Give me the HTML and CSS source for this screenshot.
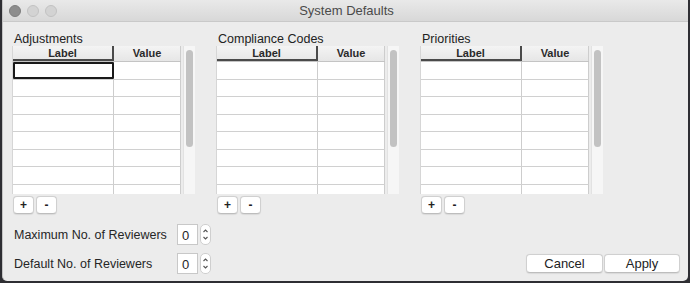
FILE: index.html
```html
<!DOCTYPE html>
<html lang="en">
<head>
    <meta charset="UTF-8">
    <title>System Defaults</title>
    <link rel="stylesheet" href="styles.css">
</head>
<body>
    <div class="window">
        <div class="titlebar">
            <div class="lights">
                <span class="light dark"></span>
                <span class="light"></span>
                <span class="light"></span>
            </div>
            <div class="title">System Defaults</div>
        </div>

        <div class="panels">
            <div class="panel">
                <div class="panel-title">Adjustments</div>
                <div class="grid-wrap">
                    <div class="grid">
                        <div class="row head"><div class="cell c1">Label</div><div class="cell c2">Value</div></div>
                        <div class="row"><div class="cell c1 focus"></div><div class="cell c2"></div></div>
                        <div class="row"><div class="cell c1"></div><div class="cell c2"></div></div>
                        <div class="row"><div class="cell c1"></div><div class="cell c2"></div></div>
                        <div class="row"><div class="cell c1"></div><div class="cell c2"></div></div>
                        <div class="row"><div class="cell c1"></div><div class="cell c2"></div></div>
                        <div class="row"><div class="cell c1"></div><div class="cell c2"></div></div>
                        <div class="row"><div class="cell c1"></div><div class="cell c2"></div></div>
                        <div class="row"><div class="cell c1"></div><div class="cell c2"></div></div>
                    </div>
                    <div class="scroll"><div class="thumb"></div></div>
                </div>
                <div class="pm"><button class="small">+</button><button class="small">-</button></div>
            </div>

            <div class="panel">
                <div class="panel-title">Compliance Codes</div>
                <div class="grid-wrap">
                    <div class="grid">
                        <div class="row head"><div class="cell c1">Label</div><div class="cell c2">Value</div></div>
                        <div class="row"><div class="cell c1"></div><div class="cell c2"></div></div>
                        <div class="row"><div class="cell c1"></div><div class="cell c2"></div></div>
                        <div class="row"><div class="cell c1"></div><div class="cell c2"></div></div>
                        <div class="row"><div class="cell c1"></div><div class="cell c2"></div></div>
                        <div class="row"><div class="cell c1"></div><div class="cell c2"></div></div>
                        <div class="row"><div class="cell c1"></div><div class="cell c2"></div></div>
                        <div class="row"><div class="cell c1"></div><div class="cell c2"></div></div>
                        <div class="row"><div class="cell c1"></div><div class="cell c2"></div></div>
                    </div>
                    <div class="scroll"><div class="thumb"></div></div>
                </div>
                <div class="pm"><button class="small">+</button><button class="small">-</button></div>
            </div>

            <div class="panel">
                <div class="panel-title">Priorities</div>
                <div class="grid-wrap">
                    <div class="grid">
                        <div class="row head"><div class="cell c1">Label</div><div class="cell c2">Value</div></div>
                        <div class="row"><div class="cell c1"></div><div class="cell c2"></div></div>
                        <div class="row"><div class="cell c1"></div><div class="cell c2"></div></div>
                        <div class="row"><div class="cell c1"></div><div class="cell c2"></div></div>
                        <div class="row"><div class="cell c1"></div><div class="cell c2"></div></div>
                        <div class="row"><div class="cell c1"></div><div class="cell c2"></div></div>
                        <div class="row"><div class="cell c1"></div><div class="cell c2"></div></div>
                        <div class="row"><div class="cell c1"></div><div class="cell c2"></div></div>
                        <div class="row"><div class="cell c1"></div><div class="cell c2"></div></div>
                    </div>
                    <div class="scroll"><div class="thumb"></div></div>
                </div>
                <div class="pm"><button class="small">+</button><button class="small">-</button></div>
            </div>
        </div>

        <div class="bottom">
            <div class="fields">
                <div class="field">
                    <span class="field-label">Maximum No. of Reviewers</span>
                    <span class="num">0</span>
                    <span class="stepper">
                        <svg width="11" height="21" viewBox="0 0 11 21"><path d="M3.5 8 L5.5 6 L7.5 8 M3.5 13 L5.5 15 L7.5 13" fill="none" stroke="#555" stroke-width="1.1"/></svg>
                    </span>
                </div>
                <div class="field">
                    <span class="field-label">Default No. of Reviewers</span>
                    <span class="num">0</span>
                    <span class="stepper">
                        <svg width="11" height="21" viewBox="0 0 11 21"><path d="M3.5 8 L5.5 6 L7.5 8 M3.5 13 L5.5 15 L7.5 13" fill="none" stroke="#555" stroke-width="1.1"/></svg>
                    </span>
                </div>
            </div>
            <div class="actions">
                <button class="btn cancel">Cancel</button>
                <button class="btn apply">Apply</button>
            </div>
        </div>
    </div>
</body>
</html>
```

FILE: styles.css
```css
body {
    margin: 0;
    padding: 0;
    background-color: #2e2e33;
    font-family: "Liberation Sans", Arial, sans-serif;
    color: #262626;
}

.window {
    margin-left: 2px;
    width: 686px;
    height: 281px;
    background-color: #ececec;
    border-radius: 0 0 5px 5px;
    border-left: 1px solid #c4c4c4;
    box-sizing: border-box;
    overflow: hidden;
}

.titlebar {
    height: 22px;
    box-sizing: border-box;
    border-bottom: 1px solid #c9c9c9;
    background: linear-gradient(#e9e9e9, #d8d8d8);
    display: flex;
    align-items: center;
}

.lights {
    display: flex;
    gap: 6px;
    padding-left: 6px;
    width: 120px;
    box-sizing: border-box;
}

.light {
    width: 12px;
    height: 12px;
    border-radius: 50%;
    background-color: #d3d3d3;
    border: 1px solid #c2c2c2;
    box-sizing: border-box;
}

.light.dark {
    background-color: #8d8d8d;
    border-color: #7e7e7e;
}

.title {
    width: 447px;
    text-align: center;
    font-size: 13px;
    color: #4a4a4a;
}

.panels {
    display: flex;
    gap: 20px;
    padding: 9px 0 0 9px;
}

.panel {
    width: 184px;
}

.panel-title {
    font-size: 12.5px;
    line-height: 14px;
    padding: 1px 0 0 2px;
    color: #222;
}

.grid-wrap {
    display: flex;
    gap: 2px;
    height: 148px;
}

.grid {
    width: 169px;
    height: 148px;
    overflow: hidden;
    background-color: #fff;
    border-left: 1px solid #d6d6d6;
    box-sizing: border-box;
}

.row {
    display: flex;
    height: 17.5px;
    box-sizing: border-box;
    border-bottom: 1px solid #d0d0d0;
}

.row.head {
    height: 16px;
    background: linear-gradient(#f4f4f4, #e6e6e6);
    border-bottom: 1px solid #c4c4c4;
    font-size: 11px;
    font-weight: bold;
    line-height: 15px;
    text-align: center;
    color: #2a2a2a;
}

.cell {
    box-sizing: border-box;
}

.c1 {
    width: 101px;
    border-right: 1px solid #cdcdcd;
}

.c2 {
    width: 67px;
    border-right: 1px solid #cdcdcd;
}

.row.head .c1 {
    border-right: 2px solid #4a4a4a;
    border-bottom: 2px solid #4a4a4a;
}

.cell.focus {
    border: 2px solid #1a1a1a;
    border-radius: 1px;
}

.scroll {
    width: 12px;
    height: 148px;
    background-color: #f6f6f6;
    border-left: 1px solid #e2e2e2;
    box-sizing: border-box;
    padding: 4px 0 0 2px;
}

.thumb {
    width: 7px;
    height: 97px;
    background-color: #c2c2c2;
    border-radius: 4px;
}

.pm {
    display: flex;
    gap: 2px;
    padding: 2px 0 0 1px;
}

button {
    font-family: "Liberation Sans", Arial, sans-serif;
    background-color: #fff;
    border: 1px solid #d0d0d0;
    border-bottom-color: #bdbdbd;
    border-radius: 4px;
    color: #222;
    padding: 0;
    box-shadow: 0 0.5px 1px rgba(0, 0, 0, 0.08);
}

.small {
    width: 21px;
    height: 18px;
    font-size: 12px;
    font-weight: bold;
    line-height: 14px;
}

.bottom {
    display: flex;
    justify-content: space-between;
    align-items: flex-end;
    padding: 10px 8px 0 11px;
}

.fields {
    display: flex;
    flex-direction: column;
    gap: 8px;
}

.field {
    display: flex;
    align-items: center;
    height: 21px;
}

.field-label {
    width: 163px;
    font-size: 12.5px;
}

.num {
    width: 21px;
    height: 21px;
    box-sizing: border-box;
    background-color: #fff;
    border: 1px solid #c8c8c8;
    font-size: 13px;
    line-height: 21px;
    padding-left: 4px;
}

.stepper {
    margin-left: 2px;
    width: 11px;
    height: 21px;
    box-sizing: border-box;
    background-color: #fff;
    border: 1px solid #cfcfcf;
    border-radius: 5px;
    display: flex;
}

.stepper svg {
    margin: -1px;
}

.actions {
    display: flex;
    gap: 1px;
    margin-bottom: 1px;
}

.btn {
    height: 19px;
    font-size: 13px;
    line-height: 17px;
}

.cancel {
    width: 77px;
}

.apply {
    width: 76px;
}
```
